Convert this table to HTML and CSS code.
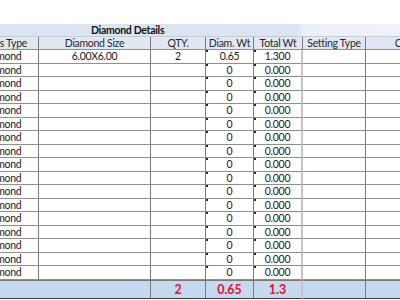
FILE: index.html
```html
<!DOCTYPE html>
<html>
<head>
<meta charset="utf-8">
<link rel="stylesheet" href="styles.css">
</head>
<body>
<div class="sheet">
  <div class="title">Diamond Details</div>

  <div class="cell hd st-hd">Stones Type</div>
  <div class="cell hd">Diamond Size</div>
  <div class="cell hd">QTY.</div>
  <div class="cell hd">Diam. Wt</div>
  <div class="cell hd">Total Wt</div>
  <div class="cell hd">Setting Type</div>
  <div class="cell hd">Color</div>

  <div class="cell st">Diamond</div><div class="cell">6.00X6.00</div><div class="cell">2</div><div class="cell mk">0.65</div><div class="cell mk sep">1.300</div><div class="cell"></div><div class="cell"></div>
  <div class="cell st">Diamond</div><div class="cell"></div><div class="cell"></div><div class="cell mk">0</div><div class="cell mk sep">0.000</div><div class="cell"></div><div class="cell"></div>
  <div class="cell st">Diamond</div><div class="cell"></div><div class="cell"></div><div class="cell mk">0</div><div class="cell mk sep">0.000</div><div class="cell"></div><div class="cell"></div>
  <div class="cell st">Diamond</div><div class="cell"></div><div class="cell"></div><div class="cell mk">0</div><div class="cell mk sep">0.000</div><div class="cell"></div><div class="cell"></div>
  <div class="cell st">Diamond</div><div class="cell"></div><div class="cell"></div><div class="cell mk">0</div><div class="cell mk sep">0.000</div><div class="cell"></div><div class="cell"></div>
  <div class="cell st">Diamond</div><div class="cell"></div><div class="cell"></div><div class="cell mk">0</div><div class="cell mk sep">0.000</div><div class="cell"></div><div class="cell"></div>
  <div class="cell st">Diamond</div><div class="cell"></div><div class="cell"></div><div class="cell mk">0</div><div class="cell mk sep">0.000</div><div class="cell"></div><div class="cell"></div>
  <div class="cell st">Diamond</div><div class="cell"></div><div class="cell"></div><div class="cell mk">0</div><div class="cell mk sep">0.000</div><div class="cell"></div><div class="cell"></div>
  <div class="cell st">Diamond</div><div class="cell"></div><div class="cell"></div><div class="cell mk">0</div><div class="cell mk sep">0.000</div><div class="cell"></div><div class="cell"></div>
  <div class="cell st">Diamond</div><div class="cell"></div><div class="cell"></div><div class="cell mk">0</div><div class="cell mk sep">0.000</div><div class="cell"></div><div class="cell"></div>
  <div class="cell st">Diamond</div><div class="cell"></div><div class="cell"></div><div class="cell mk">0</div><div class="cell mk sep">0.000</div><div class="cell"></div><div class="cell"></div>
  <div class="cell st">Diamond</div><div class="cell"></div><div class="cell"></div><div class="cell mk">0</div><div class="cell mk sep">0.000</div><div class="cell"></div><div class="cell"></div>
  <div class="cell st">Diamond</div><div class="cell"></div><div class="cell"></div><div class="cell mk">0</div><div class="cell mk sep">0.000</div><div class="cell"></div><div class="cell"></div>
  <div class="cell st">Diamond</div><div class="cell"></div><div class="cell"></div><div class="cell mk">0</div><div class="cell mk sep">0.000</div><div class="cell"></div><div class="cell"></div>
  <div class="cell st">Diamond</div><div class="cell"></div><div class="cell"></div><div class="cell mk">0</div><div class="cell mk sep">0.000</div><div class="cell"></div><div class="cell"></div>
  <div class="cell st">Diamond</div><div class="cell"></div><div class="cell"></div><div class="cell mk">0</div><div class="cell mk sep">0.000</div><div class="cell"></div><div class="cell"></div>
  <div class="cell st">Diamond</div><div class="cell"></div><div class="cell"></div><div class="cell mk">0</div><div class="cell mk sep">0.000</div><div class="cell"></div><div class="cell"></div>

  <div class="cell tot span2"></div>
  <div class="cell tot red">2</div>
  <div class="cell tot red">0.65</div>
  <div class="cell tot red sep">1.3</div>
  <div class="cell tot"></div>
  <div class="cell tot"></div>
</div>
</body>
</html>
```

FILE: styles.css
```css
html, body {
  margin: 0;
  padding: 0;
  background: #ffffff;
  overflow: hidden;
}

body {
  font-family: Lato, "Liberation Sans", sans-serif;
  font-size: 10.5px;
  letter-spacing: -0.3px;
  color: #1a1a1a;
}

.sheet {
  margin-top: 24px;
  margin-left: -39px;
  width: 487px;
  display: grid;
  grid-template-columns: 78px 112px 55px 48px 49px 63px 82px;
  grid-template-rows: 13px 13px repeat(17, 13.5px) 19px;
}

.title {
  grid-column: 1 / span 7;
  background: linear-gradient(to right, #dbe5f1 0, #dbe5f1 336px, #eaf0f7 342px, #f1f5fa 100%);
  border-bottom: 1px solid #c4ccd6;
  font-weight: bold;
  color: #111;
  padding-left: 130px;
  line-height: 13px;
  box-sizing: border-box;
}

.cell {
  box-sizing: border-box;
  border-right: 1px solid #7a7a7a;
  border-bottom: 1px solid #8f8f8f;
  text-align: center;
  line-height: 12.5px;
  white-space: nowrap;
  overflow: hidden;
  position: relative;
}

.st {
  padding-left: 4px;
}

.st-hd {
  text-align: right;
  padding-right: 11px;
}

.hd {
  background: #e1e8f1;
  color: #2a2a2a;
}

.sep {
  border-right: 2px solid #c6c6c6;
}

.hd.sep {
  border-right: 1px solid #7a7a7a;
}

.mk::before {
  content: "";
  position: absolute;
  left: 0;
  top: 0;
  width: 2px;
  height: 2px;
  background: #2b2b2b;
}

.tot {
  background: #c5d9f1;
  border-bottom: 1px solid #3c3c3c;
  border-top: 1px solid #7a7a7a;
}

.span2 {
  grid-column: span 2;
}

.red {
  color: #e3102a;
  font-weight: bold;
  font-size: 12.5px;
  letter-spacing: 0;
  line-height: 17px;
}
```
